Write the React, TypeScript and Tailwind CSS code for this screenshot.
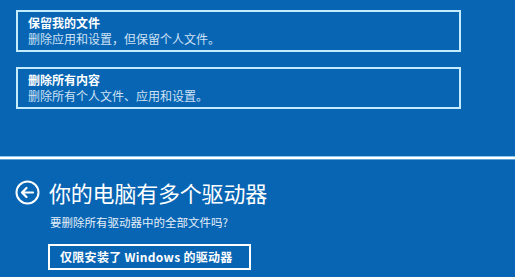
export default function App() {
  const font = { fontFamily: '"Noto Sans CJK SC", "Noto Sans", sans-serif' };
  return (
    <div
      className="w-[515px] h-[277px] overflow-hidden bg-[#0865b3] text-white"
      style={font}
    >
      {/* Option cards */}
      <div className="flex flex-col gap-[15px] pl-[16px] pt-[10px]">
        <div className="w-[445px] h-[42px] border-2 border-[#c4ecff] pl-[10px] pt-[3px] flex flex-col">
          <span className="text-[12px] leading-[15px] font-bold">保留我的文件</span>
          <span className="text-[12px] leading-[18px] text-[#cfe2f5]">
            删除应用和设置，但保留个人文件。
          </span>
        </div>
        <div className="w-[445px] h-[42px] border-2 border-[#c4ecff] pl-[10px] pt-[3px] flex flex-col">
          <span className="text-[12px] leading-[15px] font-bold">删除所有内容</span>
          <span className="text-[12px] leading-[18px] text-[#cfe2f5]">
            删除所有个人文件、应用和设置。
          </span>
        </div>
      </div>

      {/* Separator */}
      <div className="mt-[47px] flex flex-col">
        <div className="h-px bg-[#8cc8ee]" />
        <div className="h-[2px] bg-white" />
        <div className="h-px bg-[#5aa2d8]" />
      </div>

      {/* Drives page */}
      <div className="pl-[15px] pt-[18px]">
        <div className="flex items-center gap-[9px]">
          <svg width="25" height="25" viewBox="0 0 25 25" fill="none">
            <circle cx="12.5" cy="12.5" r="11" stroke="white" strokeWidth="2" />
            <path
              d="M18 12.5H7.5M11.5 8L7 12.5L11.5 17"
              stroke="white"
              strokeWidth="2.2"
              strokeLinecap="round"
              strokeLinejoin="round"
            />
          </svg>
          <span className="text-[22px] leading-[28px] tracking-[-0.2px]">
            你的电脑有多个驱动器
          </span>
        </div>
        <div className="pl-[35px] mt-[8px] text-[11.5px] leading-[16px] text-[#e6f0fa]">
          要删除所有驱动器中的全部文件吗?
        </div>
        <div className="ml-[33px] mt-[14px] w-[203px] h-[26px] border-2 border-white flex items-center pl-[10px]">
          <span className="text-[12px] leading-[16px] font-bold tracking-[0.3px]">
            仅限安装了 Windows 的驱动器
          </span>
        </div>
      </div>
    </div>
  );
}
